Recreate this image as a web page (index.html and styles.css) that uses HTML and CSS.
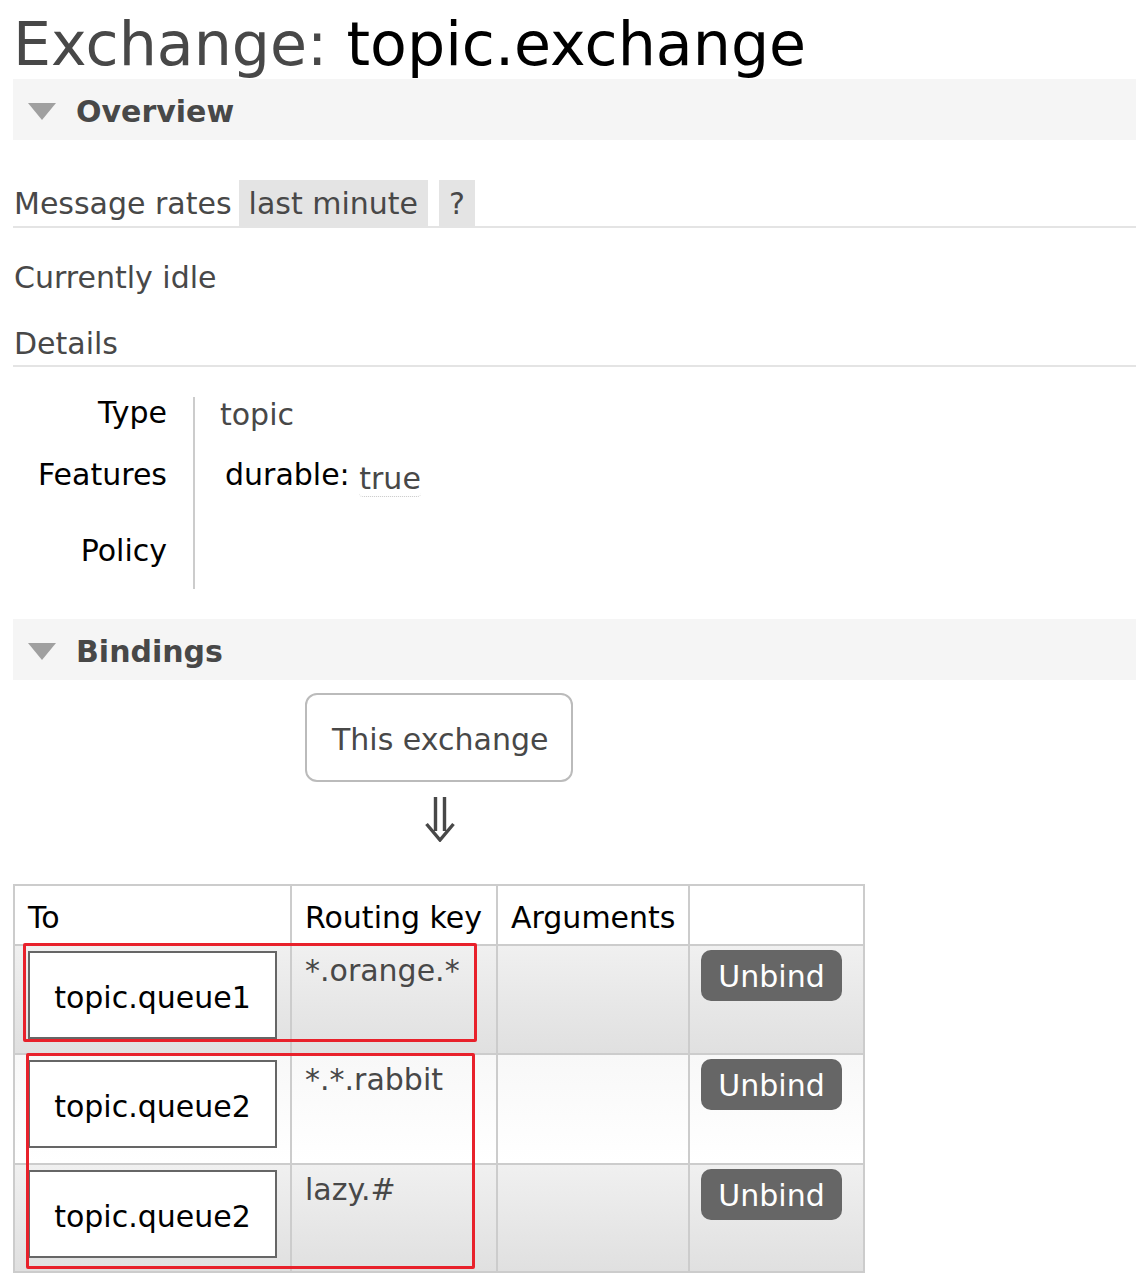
FILE: index.html
```html
<!DOCTYPE html>
<html>
<head>
<meta charset="utf-8">
<link rel="stylesheet" href="styles.css">
</head>
<body>
<div class="main">
  <h1 class="title"><span class="title-label">Exchange:</span> <b>topic.exchange</b></h1>

  <div class="section-bar"><span class="tri"></span><h2>Overview</h2></div>

  <div class="rates">
    <span class="rates-label">Message rates</span>
    <span class="pill">last minute</span>
    <span class="pill pill-q">?</span>
  </div>

  <p class="idle">Currently idle</p>
  <h3 class="details-h">Details</h3>

  <div class="facts">
    <div class="fl r1">Type</div><div class="fv r1"><span class="v-topic">topic</span></div>
    <div class="fl r2">Features</div><div class="fv r2"><span class="feat">durable:</span> <abbr class="tf">true</abbr></div>
    <div class="fl r3">Policy</div><div class="fv r3"></div>
  </div>

  <div class="section-bar bindings"><span class="tri"></span><h2>Bindings</h2></div>

  <div class="this-ex">This exchange</div>
  <div class="arrow">
    <svg width="30" height="45" viewBox="0 0 30 45"><path d="M10.5 0 V34 M19.5 0 V34 M1.5 27 L15 43 L28.5 27" fill="none" stroke="#484848" stroke-width="3.4" stroke-linejoin="miter"/></svg>
  </div>

  <div class="tbl-wrap">
    <div class="tbl">
      <div class="th">To</div>
      <div class="th">Routing key</div>
      <div class="th">Arguments</div>
      <div class="th"></div>

      <div class="td odd row1"><div class="qbox">topic.queue1</div></div>
      <div class="td odd row1 key">*.orange.*</div>
      <div class="td odd row1"></div>
      <div class="td odd row1 act"><span class="btn">Unbind</span></div>

      <div class="td even row2"><div class="qbox">topic.queue2</div></div>
      <div class="td even row2 key">*.*.rabbit</div>
      <div class="td even row2"></div>
      <div class="td even row2 act"><span class="btn">Unbind</span></div>

      <div class="td odd row3"><div class="qbox">topic.queue2</div></div>
      <div class="td odd row3 key">lazy.#</div>
      <div class="td odd row3"></div>
      <div class="td odd row3 act"><span class="btn">Unbind</span></div>
    </div>
    <div class="mark mark1"></div>
    <div class="mark mark2"></div>
  </div>
</div>
</body>
</html>
```
FILE: styles.css
```css
html, body {
  margin: 0;
  padding: 0;
  background: #fff;
}
body {
  font-family: "DejaVu Sans", Verdana, sans-serif;
  font-size: 30px;
  color: #484848;
}
.main {
  margin-left: 13px;
}
.title {
  margin: 14px 0 5px 0;
  font-size: 60.2px;
  line-height: 60px;
  font-weight: normal;
  color: #484848;
  white-space: nowrap;
}
.title b {
  font-weight: normal;
  color: #000;
}
.section-bar {
  height: 61px;
  background: #f5f5f5;
  display: flex;
  align-items: flex-start;
  box-sizing: border-box;
  padding-top: 4px;
}
.tri {
  width: 0;
  height: 0;
  margin: 20px 0 0 15px;
  border-left: 14px solid transparent;
  border-right: 14px solid transparent;
  border-top: 17px solid #a0a0a0;
}
.section-bar h2 {
  margin: 0 0 0 20px;
  font-size: 30px;
  line-height: 57px;
  font-weight: bold;
  color: #484848;
}
.rates {
  margin-top: 40px;
  display: flex;
  align-items: flex-start;
  border-bottom: 2px solid #e4e4e4;
  height: 46px;
}
.rates-label {
  padding-top: 2px;
  line-height: 44px;
  margin-left: 1px;
}
.pill {
  background: #e4e4e4;
  height: 46px;
  box-sizing: border-box;
  padding: 2px 10px 0 10px;
  line-height: 44px;
  margin-left: 7px;
}
.pill-q {
  margin-left: 11px;
  padding: 2px 10px 0 10px;
}
.idle {
  margin: 32px 0 0 1px;
  line-height: normal;
}
.details-h {
  margin: 31px 0 0 0;
  padding: 0 0 4px 1px;
  font-size: 30px;
  font-weight: normal;
  line-height: normal;
  border-bottom: 2px solid #e4e4e4;
}
.facts {
  margin-top: 30px;
  display: grid;
  grid-template-columns: 180px auto;
  grid-template-rows: 62px 76px 54px;
  line-height: 30px;
}
.fl {
  text-align: right;
  padding: 1px 26px 0 0;
  color: #000;
}
.fv {
  border-left: 2px solid #ccc;
  padding: 1px 0 0 25px;
}
.v-topic {
  position: relative;
  top: 2px;
}
.feat {
  color: #000;
  margin-left: 5px;
}
.tf {
  text-decoration: none;
  position: relative;
  top: 4px;
  border-bottom: 1px dotted #c8c8c8;
  border-radius: 0 0 4px 4px;
}
.bindings {
  margin-top: 30px;
}
.this-ex {
  margin: 13px 0 0 292px;
  width: 268px;
  height: 89px;
  box-sizing: border-box;
  border: 2px solid #bbb;
  border-radius: 12px;
  padding: 4px 0 0 25px;
  line-height: 81px;
  color: #484848;
}
.arrow {
  margin: 15px 0 0 412px;
  width: 30px;
  height: 45px;
}
.arrow svg {
  display: block;
}
.tbl-wrap {
  position: relative;
  margin-top: 42px;
  width: 852px;
}
.tbl {
  display: grid;
  grid-template-columns: 277px 206px 192px 175px;
  grid-template-rows: 60px 109px 110px 108px;
  border-right: 2px solid #ccc;
  border-bottom: 2px solid #ccc;
}
.th, .td {
  border-left: 2px solid #ccc;
  border-top: 2px solid #ccc;
  padding: 0 0 0 13px;
}
.th {
  color: #000;
  line-height: 44px;
  padding-top: 10px;
  background: #fff;
}
.td {
  line-height: normal;
  padding-top: 5px;
}
.odd {
  background: linear-gradient(#f0f0f0, #e0e0e0);
}
.even {
  background: linear-gradient(#f8f8f8, #ffffff);
}
.key {
  color: #484848;
  padding-top: 7px;
}
.qbox {
  width: 249px;
  height: 88px;
  box-sizing: border-box;
  border: 2px solid #666;
  padding-top: 4px;
  background: #fff;
  color: #000;
  display: flex;
  align-items: center;
  justify-content: center;
}
.act {
  padding-left: 11px;
  padding-top: 4px;
}
.btn {
  display: inline-block;
  background: #666;
  color: #fff;
  border-radius: 10px;
  height: 51px;
  width: 141px;
  box-sizing: border-box;
  text-align: center;
  padding-top: 3px;
  line-height: 48px;
}
.mark {
  position: absolute;
  border: 3px solid #e8212b;
  box-sizing: border-box;
  border-radius: 2px;
}
.mark1 {
  left: 10px;
  top: 59px;
  width: 454px;
  height: 99px;
}
.mark2 {
  left: 13px;
  top: 169px;
  width: 449px;
  height: 216px;
}
```
